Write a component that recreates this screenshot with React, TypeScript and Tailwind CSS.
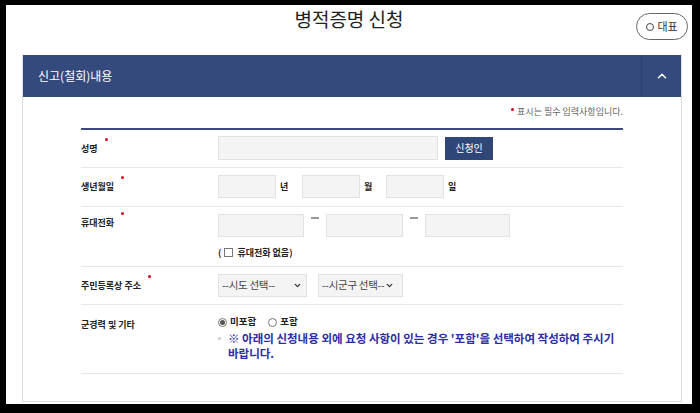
import { ChevronUp, ChevronDown } from "lucide-react";

const inputCls = "h-[23px] bg-[#f4f4f4] border border-[#e2e2e2]";

function Dot() {
  return <span className="ml-[7px] mb-[18px] w-[3px] h-[3px] rounded-full bg-[#d0021b]" />;
}

function Label({ text, req, h = 23 }: { text: string; req?: boolean; h?: number }) {
  return (
    <div className="w-[137px] shrink-0 flex items-center" style={{ height: h }}>
      <span className="text-[9px] font-bold leading-none text-[#222]">{text}</span>
      {req && <Dot />}
    </div>
  );
}

function Dash() {
  return <span className="self-start mt-[3px] mx-[7px] w-[8px] h-[2px] bg-[#9a9a9a]" />;
}

function Radio({ checked, label }: { checked?: boolean; label: string }) {
  return (
    <span className="flex items-center gap-[3px]">
      <span className="w-[9px] h-[9px] rounded-full border border-[#777] flex items-center justify-center bg-white">
        {checked && <span className="w-[5px] h-[5px] rounded-full bg-[#555]" />}
      </span>
      <span className="text-[9.5px] font-bold text-[#222] leading-none">{label}</span>
    </span>
  );
}

function Select({ text, w, tight }: { text: string; w: number; tight?: boolean }) {
  return (
    <div
      className={`h-[23px] bg-[#f4f4f4] border border-[#e2e2e2] flex items-center pl-[3px] pr-[4px] text-[10.5px] tracking-[-0.3px] whitespace-nowrap overflow-hidden text-[#444] leading-none ${tight ? "gap-[1px]" : "justify-between"}`}
      style={{ width: w }}
    >
      <span>{text}</span>
      <ChevronDown size={9} strokeWidth={3.5} className="text-[#333] shrink-0" />
    </div>
  );
}

export default function App() {
  return (
    <div className="w-[700px] h-[413px] bg-black pt-[5px] pl-[6px] pr-[8px] pb-[9px] font-['Noto_Sans_CJK_KR','Noto_Sans',sans-serif]">
      <div className="h-full bg-white flex flex-col">
        {/* title row */}
        <div className="grid grid-cols-[1fr_auto_1fr] h-[50px] shrink-0">
          <div />
          <h1 className="pt-[2px] text-[19px] leading-[24px] text-[#222] font-normal">병적증명 신청</h1>
          <div className="flex justify-end items-start pr-[4px] pt-[8px]">
            <button className="h-[27px] w-[52px] rounded-full border border-[#666] text-[11px] text-[#333] flex items-center justify-center gap-[3px]">
              <span className="w-[8px] h-[8px] rounded-full border border-[#444]" />
              대표
            </button>
          </div>
        </div>

        {/* panel */}
        <div className="flex-1 mb-[2px] ml-[16px] mr-[10px] border border-t-0 border-[#dcdcdc] flex flex-col">
          <div className="h-[42px] bg-[#354a7c] flex shrink-0">
            <div className="flex-1 flex items-center pl-[15px] text-white text-[12px]">신고(철회)내용</div>
            <div className="w-[40px] border-l border-[#2d4070] flex items-center justify-center">
              <ChevronUp size={14} strokeWidth={2.5} className="text-white" />
            </div>
          </div>

          <div className="px-[58px] pt-[9px]">
            <div className="flex justify-end items-start">
              <span className="mt-[2px] mr-[3px] w-[3px] h-[3px] rounded-full bg-[#d0021b]" />
              <span className="text-[9px] leading-[12px] text-[#666]">표시는 필수 입력사항입니다.</span>
            </div>
            <div className="mt-[10px] h-[2px] bg-[#3b4a78]" />

            {/* 성명 */}
            <div className="flex pt-[6px] pb-[7px] border-b border-[#e8e8e8]">
              <Label text="성명" req h={24} />
              <div className="flex items-center">
                <div className={`${inputCls} h-[24px] w-[220px]`} />
                <button className="ml-[7px] h-[23px] w-[48px] bg-[#2f4778] text-white text-[10px] leading-none">신청인</button>
              </div>
            </div>

            {/* 생년월일 */}
            <div className="flex pt-[7px] pb-[8px] border-b border-[#e8e8e8]">
              <Label text="생년월일" req />
              <div className="flex items-center text-[9px] font-bold text-[#222] leading-none">
                <div className={`${inputCls} w-[58px]`} />
                <span className="w-[26px] pl-[4px]">년</span>
                <div className={`${inputCls} w-[58px]`} />
                <span className="w-[26px] pl-[4px]">월</span>
                <div className={`${inputCls} w-[58px]`} />
                <span className="pl-[4px]">일</span>
              </div>
            </div>

            {/* 휴대전화 */}
            <div className="flex items-start pt-[7px] pb-[8px] border-b border-[#e8e8e8]">
              <Label text="휴대전화" req h={17} />
              <div className="flex flex-col">
                <div className="flex items-center">
                  <div className={`${inputCls} w-[86px]`} />
                  <Dash />
                  <div className={`${inputCls} w-[77px]`} />
                  <Dash />
                  <div className={`${inputCls} w-[85px]`} />
                </div>
                <div className="mt-[9px] h-[12px] flex items-center text-[9px] font-bold text-[#222] leading-none">
                  <span>(</span>
                  <span className="ml-[3px] mr-[4px] w-[9px] h-[9px] border border-[#777] bg-white" />
                  <span>휴대전화 없음)</span>
                </div>
              </div>
            </div>

            {/* 주소 */}
            <div className="flex pt-[7px] pb-[7px] border-b border-[#e8e8e8]">
              <Label text="주민등록상 주소" req />
              <div className="flex items-center gap-[11px]">
                <Select text="--시도 선택--" w={89} />
                <Select text="--시군구 선택--" w={85} tight />
              </div>
            </div>

            {/* 군경력 */}
            <div className="flex items-start pt-[10px] pb-[12px] border-b border-[#e8e8e8]">
              <Label text="군경력 및 기타" h={18} />
              <div className="flex flex-col">
                <div className="h-[14px] flex items-center gap-[12px]">
                  <Radio checked label="미포함" />
                  <Radio label="포함" />
                </div>
                <div className="mt-[2px] flex items-start text-[11.5px] font-bold leading-[15px] text-[#2d2da6] whitespace-nowrap">
                  <span className="mt-[6px] mr-[7px] w-[3px] h-[3px] rounded-full bg-[#c8c8c8] shrink-0" />
                  <p>
                    ※ 아래의 신청내용 외에 요청 사항이 있는 경우 '포함'을 선택하여 작성하여 주시기
                    <br />
                    바랍니다.
                  </p>
                </div>
              </div>
            </div>
          </div>
        </div>
      </div>
    </div>
  );
}
